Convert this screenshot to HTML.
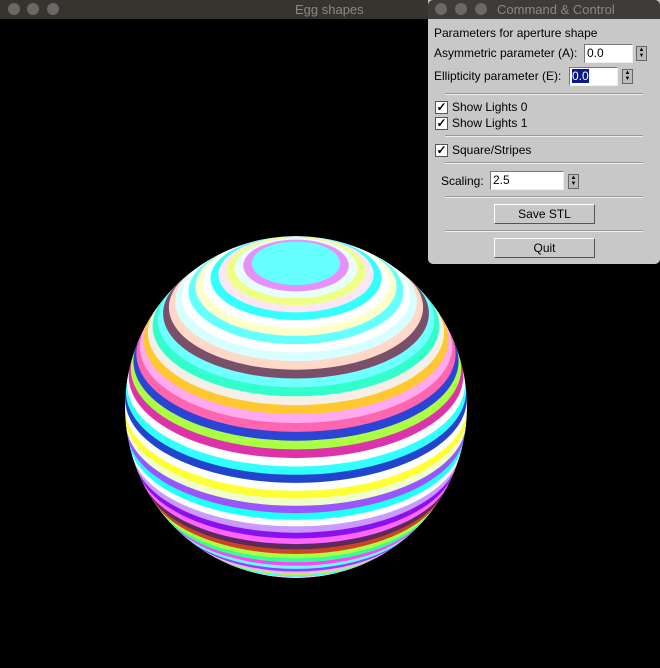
<!DOCTYPE html>
<html><head><style>
body{margin:0;width:660px;height:668px;background:#000;overflow:hidden;position:relative;font-family:"Liberation Sans",sans-serif}
.tb{position:absolute;left:0;top:0;width:660px;height:19px;background:#37332f}
.dot{position:absolute;top:3px;width:12px;height:12px;border-radius:50%;background:#6a6764}
.t{position:absolute;top:2px;font-size:13px;color:#8a8784}
#panel{position:absolute;left:428px;top:0;width:232px;height:264px;background:#c8c8c8;border-radius:0 0 5px 5px;font-size:12px;color:#000}
#panel .ptb{position:absolute;left:0;top:0;width:232px;height:19px;background:#3f3b38;border-radius:5px 5px 0 0}
.a{position:absolute;white-space:nowrap}
.in{position:absolute;background:#fff;border:1px solid #777;border-right-color:#eee;border-bottom-color:#eee;box-sizing:border-box;font-size:12px;padding:1px 2px}
.sp{position:absolute;width:11px;height:15px;background:#bbb;border:1px solid #666;box-sizing:border-box;font-size:6px;line-height:6px;text-align:center}
.sep{position:absolute;left:17px;width:198px;height:1px;background:#999;border-bottom:1px solid #eee}
.cb{position:absolute;left:7px;width:13px;height:13px;background:#fff;border:1px solid #555;box-sizing:border-box;font-size:12px;line-height:11px;text-align:center;font-weight:bold}
.btn{position:absolute;left:66px;width:101px;height:20px;border:1px solid #555;border-top-color:#fff;border-left-color:#fff;box-sizing:border-box;background:#c8c8c8;text-align:center;line-height:18px;font-size:12px}
</style></head><body>
<div class="tb"><div class="dot" style="left:8px"></div><div class="dot" style="left:27px"></div><div class="dot" style="left:47px"></div><div class="t" style="left:295px">Egg shapes</div></div>
<svg style="position:absolute;left:0;top:0" width="660" height="668">
<defs><clipPath id="c"><circle cx="296" cy="407" r="171"/></clipPath></defs>
<g clip-path="url(#c)">
<circle cx="296" cy="407" r="171" fill="#e6e8ff"/>
<ellipse cx="296" cy="542.9" rx="69.5" ry="34.1" fill="#ffffee"/>
<ellipse cx="296" cy="539.6" rx="77.6" ry="38" fill="#ff99dd"/>
<ellipse cx="296" cy="535.9" rx="85.5" ry="41.9" fill="#ffffff"/>
<ellipse cx="296" cy="531.8" rx="93.1" ry="45.6" fill="#ffaaee"/>
<ellipse cx="296" cy="527.4" rx="100.5" ry="49.3" fill="#33ffff"/>
<ellipse cx="296" cy="522.6" rx="107.6" ry="52.7" fill="#aaff44"/>
<ellipse cx="296" cy="517.6" rx="114.4" ry="56.1" fill="#ffaaff"/>
<ellipse cx="296" cy="512.2" rx="120.9" ry="59.3" fill="#8844ff"/>
<ellipse cx="296" cy="506.6" rx="127.1" ry="62.3" fill="#66ffff"/>
<ellipse cx="296" cy="500.6" rx="132.9" ry="65.1" fill="#ff44ff"/>
<ellipse cx="296" cy="494.5" rx="138.3" ry="67.8" fill="#33ff99"/>
<ellipse cx="296" cy="488" rx="143.4" ry="70.3" fill="#aaff44"/>
<ellipse cx="296" cy="481.4" rx="148.1" ry="72.6" fill="#cc4422"/>
<ellipse cx="296" cy="474.6" rx="152.4" ry="74.7" fill="#5a2a5a"/>
<ellipse cx="296" cy="467.5" rx="156.2" ry="76.6" fill="#ff66ff"/>
<ellipse cx="296" cy="460.3" rx="159.6" ry="78.2" fill="#8811ee"/>
<ellipse cx="296" cy="453" rx="162.6" ry="79.7" fill="#cc99ff"/>
<ellipse cx="296" cy="445.5" rx="165.2" ry="80.9" fill="#ffffff"/>
<ellipse cx="296" cy="437.9" rx="167.3" ry="82" fill="#22ffff"/>
<ellipse cx="296" cy="430.3" rx="168.9" ry="82.8" fill="#9955ff"/>
<ellipse cx="296" cy="422.5" rx="170.1" ry="83.3" fill="#eeffcc"/>
<ellipse cx="296" cy="414.8" rx="170.8" ry="83.7" fill="#ffff33"/>
<ellipse cx="296" cy="407" rx="171" ry="83.8" fill="#ffffff"/>
<ellipse cx="296" cy="399.2" rx="170.8" ry="83.7" fill="#2244cc"/>
<ellipse cx="296" cy="391.5" rx="170.1" ry="83.3" fill="#33ffff"/>
<ellipse cx="296" cy="383.7" rx="168.9" ry="82.8" fill="#ffffff"/>
<ellipse cx="296" cy="376.1" rx="167.3" ry="82" fill="#dd33aa"/>
<ellipse cx="296" cy="368.5" rx="165.2" ry="80.9" fill="#aaff44"/>
<ellipse cx="296" cy="361" rx="162.6" ry="79.7" fill="#2b44d6"/>
<ellipse cx="296" cy="353.7" rx="159.6" ry="78.2" fill="#ff66b0"/>
<ellipse cx="296" cy="346.5" rx="156.2" ry="76.6" fill="#ffaaee"/>
<ellipse cx="296" cy="339.4" rx="152.4" ry="74.7" fill="#ffc830"/>
<ellipse cx="296" cy="332.6" rx="148.1" ry="72.6" fill="#f4f0e8"/>
<ellipse cx="296" cy="326" rx="143.4" ry="70.3" fill="#33ffcc"/>
<ellipse cx="296" cy="319.5" rx="138.3" ry="67.8" fill="#70ffff"/>
<ellipse cx="296" cy="313.4" rx="132.9" ry="65.1" fill="#7a4f6a"/>
<ellipse cx="296" cy="307.4" rx="127.1" ry="62.3" fill="#ffd8c8"/>
<ellipse cx="296" cy="301.8" rx="120.9" ry="59.3" fill="#d8ffff"/>
<ellipse cx="296" cy="296.4" rx="114.4" ry="56.1" fill="#ffffff"/>
<ellipse cx="296" cy="291.4" rx="107.6" ry="52.7" fill="#66ffff"/>
<ellipse cx="296" cy="286.6" rx="100.5" ry="49.3" fill="#ffffcc"/>
<ellipse cx="296" cy="282.2" rx="93.1" ry="45.6" fill="#ffffff"/>
<ellipse cx="296" cy="278.1" rx="85.5" ry="41.9" fill="#33ffff"/>
<ellipse cx="296" cy="274.4" rx="77.6" ry="38" fill="#fbe6f4"/>
<ellipse cx="296" cy="271.1" rx="69.5" ry="34.1" fill="#eeff88"/>
<ellipse cx="296" cy="268.1" rx="61.3" ry="30" fill="#e8ffff"/>
<ellipse cx="296" cy="265.5" rx="52.8" ry="25.9" fill="#e890f8"/>
<ellipse cx="296" cy="263.3" rx="44.3" ry="21.7" fill="#66ffff"/>
</g></svg>
<div id="panel">
<div class="ptb"><div class="dot" style="left:7px"></div><div class="dot" style="left:27px"></div><div class="dot" style="left:47px"></div><div class="t" style="left:69px">Command &amp; Control</div></div>
<div class="a" style="left:6px;top:26px">Parameters for aperture shape</div>
<div class="a" style="left:6px;top:46px">Asymmetric parameter (A):</div>
<div class="in" style="left:156px;top:44px;width:49px;height:19px">0.0</div>
<div class="sp" style="left:208px;top:46px">▲<br>▼</div>
<div class="a" style="left:6px;top:69px">Ellipticity parameter (E):</div>
<div class="in" style="left:141px;top:67px;width:49px;height:19px"><span style="background:#0a1a8a;color:#fff">0.0</span></div>
<div class="sp" style="left:194px;top:69px">▲<br>▼</div>
<div class="sep" style="top:93px"></div>
<div class="cb" style="top:101px">✓</div><div class="a" style="left:24px;top:100px">Show Lights 0</div>
<div class="cb" style="top:117px">✓</div><div class="a" style="left:24px;top:116px">Show Lights 1</div>
<div class="sep" style="top:135px"></div>
<div class="cb" style="top:144px">✓</div><div class="a" style="left:24px;top:143px">Square/Stripes</div>
<div class="sep" style="top:162px"></div>
<div class="a" style="left:13px;top:174px">Scaling:</div>
<div class="in" style="left:62px;top:171px;width:74px;height:19px">2.5</div>
<div class="sp" style="left:140px;top:174px">▲<br>▼</div>
<div class="sep" style="top:196px"></div>
<div class="btn" style="top:204px">Save STL</div>
<div class="sep" style="top:230px"></div>
<div class="btn" style="top:238px">Quit</div>
</div>
</body></html>
